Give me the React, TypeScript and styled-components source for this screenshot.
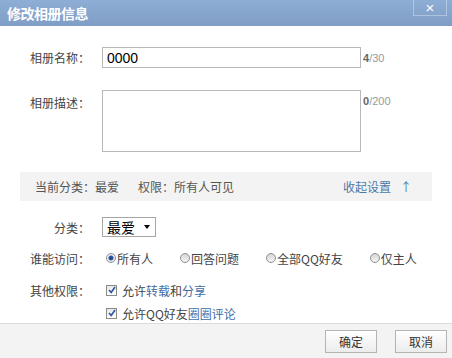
import * as React from 'react'
import styled, { createGlobalStyle } from 'styled-components'

const GlobalStyle = createGlobalStyle`
  html, body {
    margin: 0;
    padding: 0;
    background: #fff;
  }
  body {
    font-family: "Noto Sans CJK SC", "Liberation Sans", sans-serif;
    font-size: 12px;
    color: #333;
  }
`

const Dialog = styled.div`
  width: 452px;
  height: 358px;
  display: flex;
  flex-direction: column;
  background: #fff;
  overflow: hidden;
`

const TitleBar = styled.div`
  height: 26px;
  flex: none;
  display: flex;
  justify-content: space-between;
  align-items: flex-start;
  padding-left: 7px;
  background: linear-gradient(#8eaed5, #7f9dc5);
`

const Title = styled.h1`
  margin: 0;
  line-height: 26px;
  font-size: 14px;
  font-weight: bold;
  color: #fff;
  letter-spacing: -0.5px;
`

const CloseButton = styled.button`
  width: 34px;
  height: 16px;
  margin-right: 5px;
  padding: 0;
  border: 1px solid rgba(255, 255, 255, 0.35);
  border-top: none;
  background: transparent;
  color: #fff;
  font-family: "Liberation Sans", sans-serif;
  font-size: 15px;
  line-height: 13px;
  cursor: pointer;
`

const Body = styled.div`
  flex: 1;
  padding: 21px 20px 0;
  display: flex;
  flex-direction: column;
`

const Row = styled.div<{ $top?: number; $align?: string }>`
  display: flex;
  align-items: ${({ $align }) => $align || 'center'};
  margin-top: ${({ $top }) => $top || 0}px;
  min-height: 20px;
`

const Label = styled.div<{ $pad?: number }>`
  width: 70px;
  flex: none;
  text-align: right;
  color: #444;
  margin-right: 12px;
  padding-top: ${({ $pad }) => $pad || 0}px;
`

const TextInput = styled.input`
  box-sizing: border-box;
  width: 259px;
  height: 21px;
  border: 1px solid #b9b9b9;
  padding: 0 4px;
  font-family: "Liberation Sans", sans-serif;
  font-size: 14px;
  color: #000;
  outline: none;
`

const TextArea = styled.textarea`
  box-sizing: border-box;
  width: 259px;
  height: 62px;
  border: 1px solid #b9b9b9;
  padding: 3px 4px;
  resize: none;
  outline: none;
`

const Counter = styled.div<{ $pad?: number }>`
  margin-left: 2px;
  font-family: "Liberation Sans", sans-serif;
  font-size: 11px;
  color: #999;
  padding-top: ${({ $pad }) => $pad || 0}px;

  b {
    color: #666;
  }
`

const SummaryBar = styled.div`
  margin-top: 20px;
  height: 29px;
  display: flex;
  align-items: center;
  padding: 0 20px 0 15px;
  background: #f3f3f3;
  color: #555;
`

const SummaryItem = styled.span`
  margin-right: 19px;
`

const Toggle = styled.a`
  margin-left: auto;
  color: #4d78a8;
  text-decoration: none;
  cursor: pointer;

  span {
    margin-left: 9px;
  }
`

const Select = styled.div`
  box-sizing: border-box;
  width: 54px;
  height: 20px;
  border: 1px solid #a6a6a6;
  display: flex;
  align-items: center;
  padding-left: 4px;
  font-size: 14px;
  color: #000;
`

const Caret = styled.span`
  margin-left: 9px;
  width: 0;
  height: 0;
  border-left: 3.5px solid transparent;
  border-right: 3.5px solid transparent;
  border-top: 4px solid #000;
`

const Options = styled.div`
  display: flex;
  gap: 23px;
`

const Option = styled.label`
  display: flex;
  align-items: center;
  color: #444;
  cursor: pointer;
`

const Radio = styled.span<{ $on?: boolean }>`
  box-sizing: border-box;
  width: 10px;
  height: 10px;
  margin: 0 1px 0 4px;
  border-radius: 50%;
  border: 1px solid #8e8e8e;
  background: ${({ $on }) =>
    $on
      ? 'radial-gradient(circle, #1f3f7a 0, #2d5aa0 2px, #e8eef6 3px)'
      : 'linear-gradient(#d6d6d6, #f4f4f4)'};
`

const Check = styled.span`
  box-sizing: border-box;
  width: 11px;
  height: 11px;
  margin: 0 5px 0 4px;
  border: 1px solid #8a8a8a;
  background: linear-gradient(#e8e8e8, #fff);
  display: flex;
  align-items: center;
  justify-content: center;
`

const Blue = styled.span`
  color: #3f6ea6;
`

const Footer = styled.div`
  height: 30px;
  flex: none;
  border-top: 1px solid #dcdcdc;
  background: #f3f3f3;
  display: flex;
  justify-content: flex-end;
  align-items: flex-start;
  gap: 18px;
  padding: 6px 5px 0 0;
`

const Button = styled.button`
  width: 52px;
  height: 23px;
  border: 1px solid #b4b4b4;
  background: linear-gradient(#ffffff, #ececec);
  font-family: "Noto Sans CJK SC", sans-serif;
  font-size: 12px;
  color: #333;
  padding: 0;
  cursor: pointer;
`

const Tick = () => (
  <svg width="8" height="8" viewBox="0 0 8 8">
    <path d="M1 4 L3.2 6.4 L7 1" fill="none" stroke="#2b56a0" strokeWidth="1.6" />
  </svg>
)

const App = () => {
  return (
    <Dialog>
      <GlobalStyle />
      <TitleBar>
        <Title>修改相册信息</Title>
        <CloseButton>×</CloseButton>
      </TitleBar>

      <Body>
        <Row>
          <Label>相册名称：</Label>
          <TextInput defaultValue="0000" />
          <Counter>
            <b>4</b>/30
          </Counter>
        </Row>

        <Row $top={22} $align="flex-start">
          <Label $pad={4}>相册描述：</Label>
          <TextArea />
          <Counter $pad={5}>
            <b>0</b>/200
          </Counter>
        </Row>

        <SummaryBar>
          <SummaryItem>当前分类：最爱</SummaryItem>
          <SummaryItem>权限：所有人可见</SummaryItem>
          <Toggle>
            收起设置<span>↑</span>
          </Toggle>
        </SummaryBar>

        <Row $top={16}>
          <Label>分类：</Label>
          <Select>
            最爱
            <Caret />
          </Select>
        </Row>

        <Row $top={11}>
          <Label>谁能访问：</Label>
          <Options>
            <Option>
              <Radio $on />
              所有人
            </Option>
            <Option>
              <Radio />
              回答问题
            </Option>
            <Option>
              <Radio />
              全部QQ好友
            </Option>
            <Option>
              <Radio />
              仅主人
            </Option>
          </Options>
        </Row>

        <Row $top={12}>
          <Label>其他权限：</Label>
          <Option>
            <Check>
              <Tick />
            </Check>
            允许<Blue>转载</Blue>和<Blue>分享</Blue>
          </Option>
        </Row>

        <Row $top={3}>
          <Label />
          <Option>
            <Check>
              <Tick />
            </Check>
            允许QQ好友<Blue>圈圈评论</Blue>
          </Option>
        </Row>
      </Body>

      <Footer>
        <Button>确定</Button>
        <Button>取消</Button>
      </Footer>
    </Dialog>
  )
}

export default App
